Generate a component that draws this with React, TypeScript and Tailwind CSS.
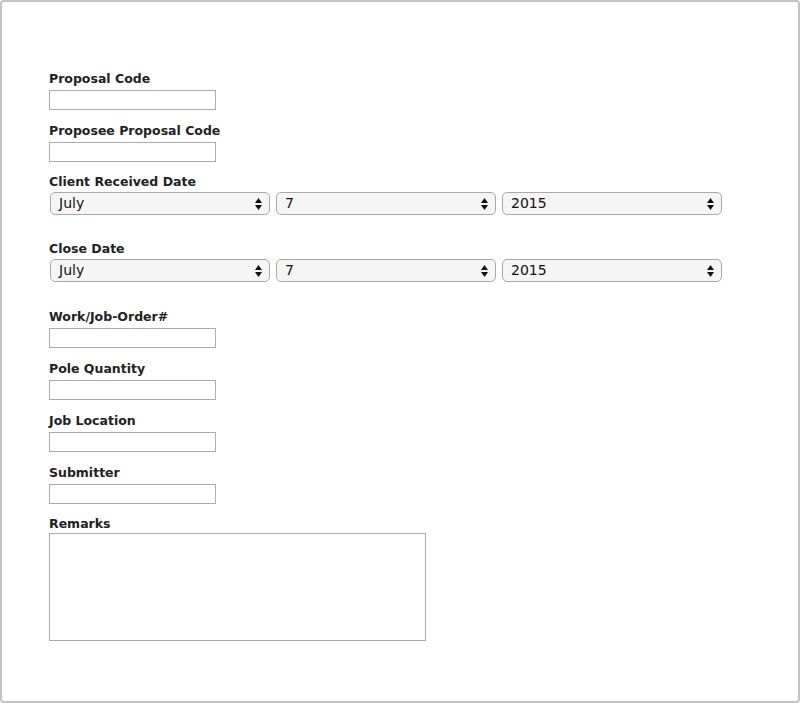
import React from "react";

const labelCls =
  "block text-[12.5px] leading-[16px] font-bold text-[#222]";
const inputCls =
  "block w-[167px] h-[20px] border border-[#ababab] bg-white outline-none";

function Arrows() {
  return (
    <svg width="7" height="12" viewBox="0 0 7 12" className="absolute right-[7px] top-[5px]">
      <path d="M3.5 0 L7 5 L0 5 Z" fill="#111" />
      <path d="M0 7 L7 7 L3.5 12 Z" fill="#111" />
    </svg>
  );
}

function Sel({ value }: { value: string }) {
  return (
    <div className="relative w-[220px] h-[23px] rounded-[5px] border border-[#a9a9a9] bg-[#f5f5f5] text-[14px] leading-[21px] text-[#111] pl-[8px]">
      {value}
      <Arrows />
    </div>
  );
}

function DateRow() {
  return (
    <div className="flex gap-[6px] ml-px">
      <Sel value="July" />
      <Sel value="7" />
      <Sel value="2015" />
    </div>
  );
}

export default function App() {
  return (
    <div
      className="w-[800px] h-[703px] border-2 border-[#c3c3c3] rounded-[4px] bg-white pl-[47px] pt-[69px]"
      style={{ fontFamily: '"DejaVu Sans", Verdana, sans-serif' }}
    >
      <label className={labelCls}>Proposal Code</label>
      <input className={inputCls + " mt-[3px]"} />

      <label className={labelCls + " mt-[13px]"}>Proposee Proposal Code</label>
      <input className={inputCls + " mt-[3px]"} />

      <label className={labelCls + " mt-[12px] mb-[2px]"}>Client Received Date</label>
      <DateRow />

      <label className={labelCls + " mt-[26px] mb-[2px]"}>Close Date</label>
      <DateRow />

      <label className={labelCls + " mt-[27px]"}>Work/Job-Order#</label>
      <input className={inputCls + " mt-[3px]"} />

      <label className={labelCls + " mt-[13px]"}>Pole Quantity</label>
      <input className={inputCls + " mt-[3px]"} />

      <label className={labelCls + " mt-[13px]"}>Job Location</label>
      <input className={inputCls + " mt-[3px]"} />

      <label className={labelCls + " mt-[13px]"}>Submitter</label>
      <input className={inputCls + " mt-[3px]"} />

      <label className={labelCls + " mt-[12px]"}>Remarks</label>
      <textarea className="block w-[377px] h-[108px] mt-px border border-[#ababab] bg-white outline-none resize-none" />
    </div>
  );
}
